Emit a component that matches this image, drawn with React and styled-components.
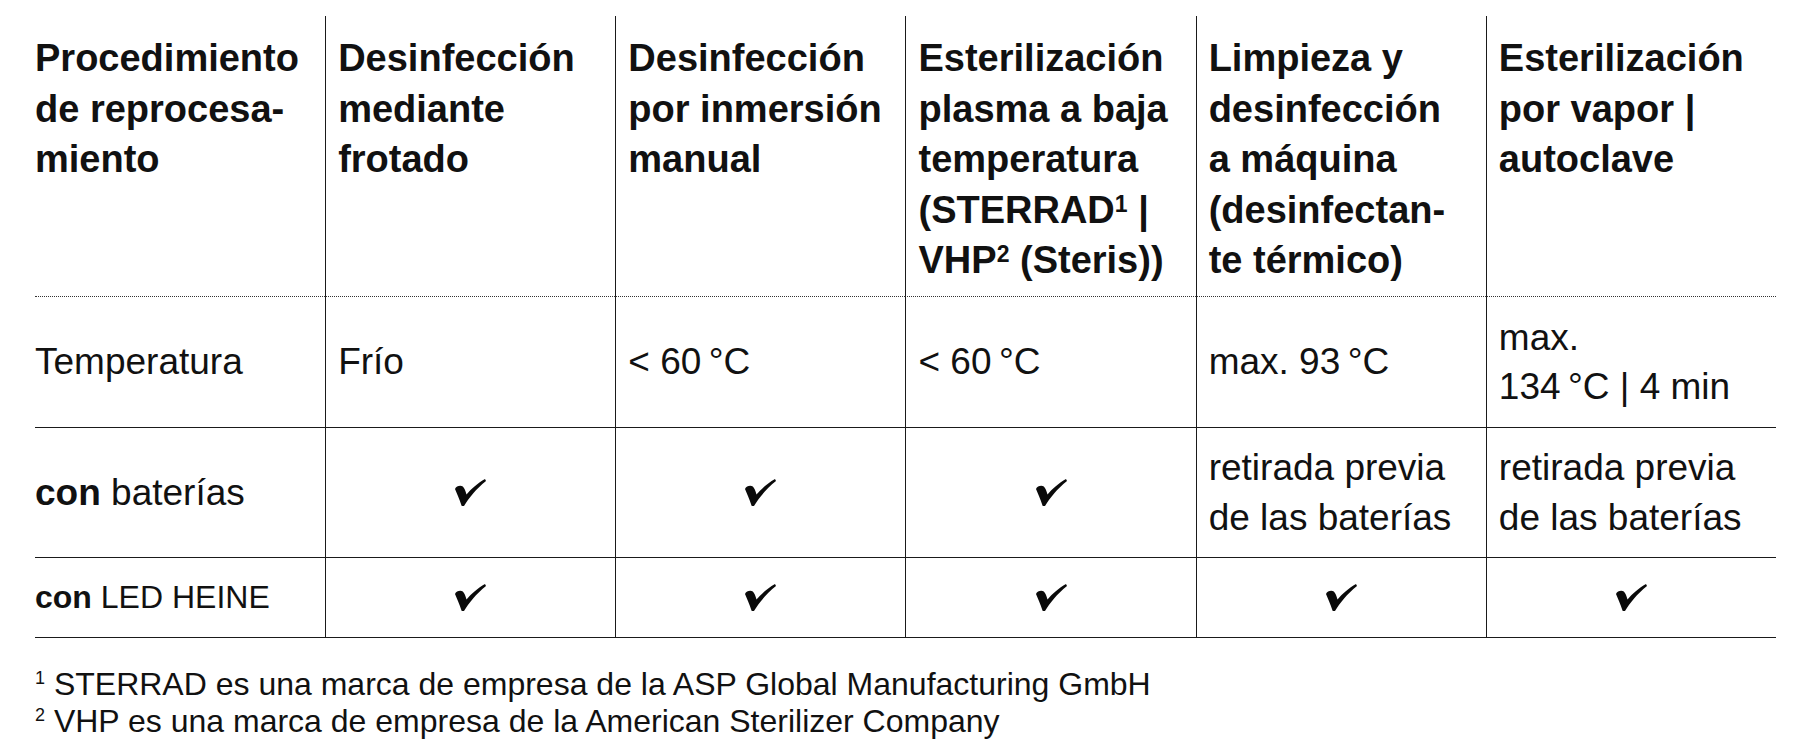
import styled, { createGlobalStyle } from 'styled-components'

const Global = createGlobalStyle`
    * {
        box-sizing: border-box;
    }
    html, body {
        margin: 0;
        background: #fff;
    }
    body {
        font-family: "Liberation Sans", Arial, Helvetica, sans-serif;
        color: #111;
    }
`

const Page = styled('div')`
    padding: 16px 35px 0;
`

const Table = styled('div')`
    display: grid;
    width: 1741px;
    grid-template-columns: repeat(6, 1fr);
    grid-template-rows: 281px 131px 130px 80px;
`

const Cell = styled('div')`
    border-left: ${(p) => (p.$first ? 'none' : '1px solid #1a1a1a')};
    border-bottom: 1px solid #1a1a1a;
    padding-left: ${(p) => (p.$first ? '0' : '12px')};
`

const HeadCell = styled(Cell)`
    border-bottom: 1px dotted #333;
    padding-top: 17px;
    font-size: 38px;
    font-weight: 700;
    line-height: 50.5px;
    white-space: nowrap;
`

const BodyCell = styled(Cell)`
    display: flex;
    align-items: center;
    justify-content: ${(p) => (p.$center ? 'center' : 'flex-start')};
    padding-left: ${(p) => (p.$first || p.$center ? '0' : '12px')};
    font-size: ${(p) => (p.$small ? '32px' : '37px')};
    line-height: 49.5px;
    white-space: nowrap;
`

const Bold = styled('b')`
    font-weight: 700;
`

const Sup = styled('sup')`
    font-size: ${(p) => p.$size}px;
    line-height: 0;
    vertical-align: ${(p) => p.$raise}px;
    font-weight: inherit;
`

const Notes = styled('div')`
    margin-top: 28px;
    font-size: 32px;
    line-height: 37px;
`

const Note = styled('p')`
    margin: 0;
`

const CheckSvg = styled('svg')`
    display: block;
    width: 31px;
    height: 27px;
`

const Check = () => (
    <CheckSvg viewBox="0 0 31 27">
        <path
            d="M9 27 C14 19 21 10 31 2 L30 0 C23 4 16 10 11.5 15.5 C10.5 12 9.5 9.2 7.8 7.6 C5.6 6 1.2 7 0 10 C1.5 14 4.5 20 6.5 26.5 C7 27.6 8.4 27.6 9 27 Z"
            fill="#0a0a0a"
        />
    </CheckSvg>
)

const th = '\u2009'

const headers = [
    ['Procedimiento', 'de reprocesa-', 'miento'],
    ['Desinfección', 'mediante', 'frotado'],
    ['Desinfección', 'por inmersión', 'manual'],
    [
        'Esterilización',
        'plasma a baja',
        'temperatura',
        <>
            (STERRAD
            <Sup $size={23} $raise={11}>
                1
            </Sup>{' '}
            |
        </>,
        <>
            VHP
            <Sup $size={23} $raise={11}>
                2
            </Sup>{' '}
            (Steris))
        </>,
    ],
    ['Limpieza y', 'desinfección', 'a máquina', '(desinfectan-', 'te térmico)'],
    ['Esterilización', 'por vapor |', 'autoclave'],
]

const removal = ['retirada previa', 'de las baterías']

const rows = [
    {
        label: 'Temperatura',
        cells: [
            ['Frío'],
            [`< 60${th}°C`],
            [`< 60${th}°C`],
            [`max. 93${th}°C`],
            ['max.', `134${th}°C | 4 min`],
        ],
    },
    {
        label: (
            <>
                <Bold>con</Bold> baterías
            </>
        ),
        cells: ['check', 'check', 'check', removal, removal],
    },
    {
        label: (
            <>
                <Bold>con</Bold> LED HEINE
            </>
        ),
        small: true,
        cells: ['check', 'check', 'check', 'check', 'check'],
    },
]

const Lines = ({ lines }) =>
    lines.map((line, i) => (
        <span key={i}>
            {line}
            {i < lines.length - 1 && <br />}
        </span>
    ))

const App = () => {
    return (
        <Page>
            <Global />
            <Table>
                {headers.map((lines, i) => (
                    <HeadCell key={i} $first={i === 0}>
                        <Lines lines={lines} />
                    </HeadCell>
                ))}
                {rows.map((row, r) => (
                    <>
                        <BodyCell key={`l${r}`} $first $small={row.small}>
                            <span>{row.label}</span>
                        </BodyCell>
                        {row.cells.map((cell, c) =>
                            cell === 'check' ? (
                                <BodyCell key={`${r}-${c}`} $center>
                                    <Check />
                                </BodyCell>
                            ) : (
                                <BodyCell key={`${r}-${c}`}>
                                    <div>
                                        <Lines lines={cell} />
                                    </div>
                                </BodyCell>
                            )
                        )}
                    </>
                ))}
            </Table>
            <Notes>
                <Note>
                    <Sup $size={18} $raise={11}>
                        1
                    </Sup>{' '}
                    STERRAD es una marca de empresa de la ASP Global
                    Manufacturing GmbH
                </Note>
                <Note>
                    <Sup $size={18} $raise={11}>
                        2
                    </Sup>{' '}
                    VHP es una marca de empresa de la American Sterilizer
                    Company
                </Note>
            </Notes>
        </Page>
    )
}

export default App
